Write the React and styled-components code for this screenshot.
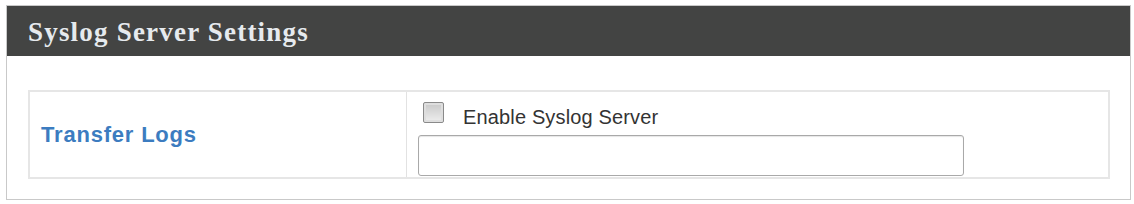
import React from "react";
import styled, { createGlobalStyle } from "styled-components";

const Global = createGlobalStyle`
  html, body {
    margin: 0;
    padding: 0;
    background: #fff;
  }
`;

const Panel = styled.div`
  margin: 5px 3px 0 6px;
  border: 1px solid #c9c9c9;
  background: #fff;
`;

const Header = styled.div`
  height: 50px;
  background: #434443;
  display: flex;
  align-items: center;
  padding-left: 21px;
`;

const Title = styled.h2`
  margin: 0;
  font-family: "Liberation Serif", "DejaVu Serif", serif;
  font-weight: bold;
  font-size: 27px;
  letter-spacing: 1.2px;
  color: #e6eaee;
  padding-top: 2px;
`;

const Body = styled.div`
  padding: 34px 20px 20px 21px;
`;

const Table = styled.div`
  display: grid;
  grid-template-columns: 377px 1fr;
  border: 2px solid #e6e6e6;
`;

const LabelCell = styled.div`
  display: flex;
  align-items: center;
  padding-left: 11px;
  border-right: 1px solid #e2e2e2;
  font-family: "Liberation Sans", Arial, sans-serif;
  font-weight: bold;
  font-size: 22px;
  letter-spacing: 0.8px;
  color: #3c7cc0;
`;

const ValueCell = styled.div`
  display: flex;
  flex-direction: column;
  padding: 9px 0 1px 11px;
`;

const CheckRow = styled.label`
  display: flex;
  align-items: flex-start;
  height: 34px;
  gap: 19px;
  font-family: "Liberation Sans", Arial, sans-serif;
  font-size: 20px;
  line-height: 24px;
  color: #333;
`;

const Box = styled.input.attrs({ type: "checkbox" })`
  appearance: none;
  margin: 1px 0 0 5px;
  width: 21px;
  height: 21px;
  box-sizing: border-box;
  border: 1px solid #8a8a8a;
  border-radius: 2px;
  background: linear-gradient(#c8c8c8, #eeeeee);
  box-shadow: inset 0 0 0 2px #dedede;
`;

const CheckText = styled.span`
  margin-top: 4px;
  letter-spacing: 0.15px;
`;

const TextField = styled.input.attrs({ type: "text" })`
  box-sizing: border-box;
  width: 546px;
  height: 41px;
  border: 1px solid #a9a9a9;
  border-radius: 3px;
  background: #fff;
  box-shadow: inset 0 1px 1px #e6e6e6;
  outline: none;
`;

export default function App() {
  return (
    <>
      <Global />
      <Panel>
        <Header>
          <Title>Syslog Server Settings</Title>
        </Header>
        <Body>
          <Table>
            <LabelCell>Transfer Logs</LabelCell>
            <ValueCell>
              <CheckRow>
                <Box />
                <CheckText>Enable Syslog Server</CheckText>
              </CheckRow>
              <TextField />
            </ValueCell>
          </Table>
        </Body>
      </Panel>
    </>
  );
}
